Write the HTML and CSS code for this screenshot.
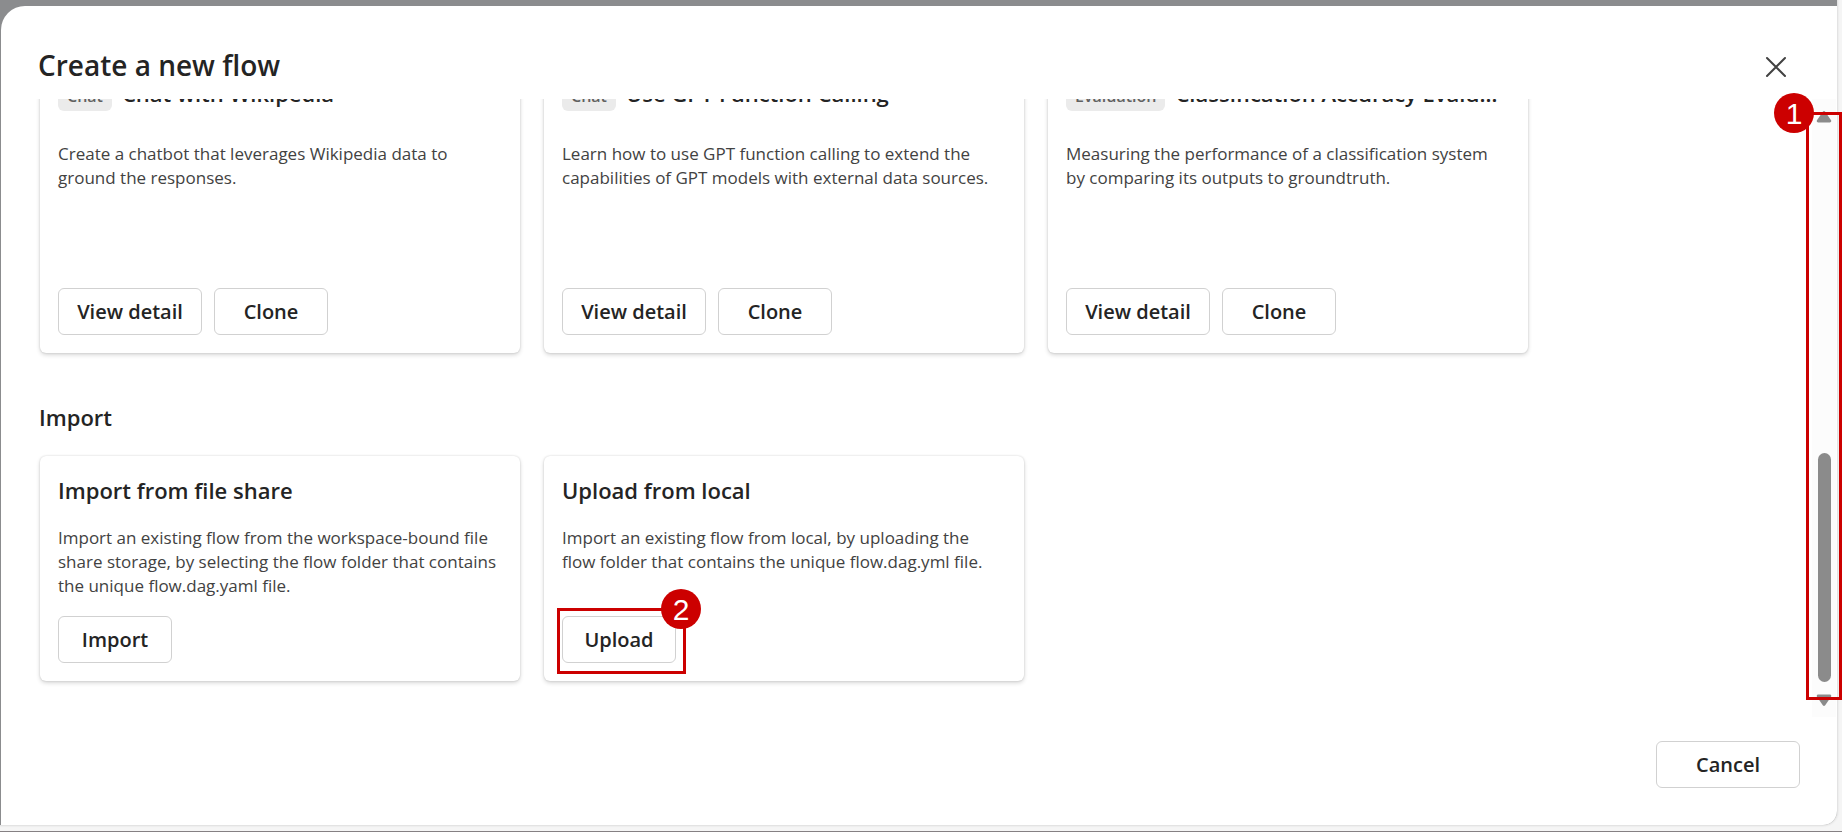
FILE: index.html
```html
<!DOCTYPE html>
<html lang="en">
<head>
<meta charset="utf-8">
<title>Create a new flow</title>
<link rel="stylesheet" href="styles.css">
</head>
<body>
<div class="backdrop">
  <main class="dialog" role="dialog" aria-labelledby="dialog-title">
    <header class="dialog-header">
      <h1 class="dialog-title" id="dialog-title">Create a new flow</h1>
      <button class="close" type="button" aria-label="Close">
        <svg width="22" height="22" viewBox="0 0 22 22" fill="none" stroke="#424242" stroke-width="2" stroke-linecap="round"><path d="M2 2 20 20M20 2 2 20"/></svg>
      </button>
    </header>

    <div class="scroll-area">
      <div class="content">
        <section class="cards">
          <article class="card">
            <div class="card-head"><span class="tag">Chat</span><h3 class="card-title">Chat with Wikipedia</h3></div>
            <p class="card-text tall">Create a chatbot that leverages Wikipedia data to ground the responses.</p>
            <div class="actions"><button class="btn wide" type="button">View detail</button><button class="btn" type="button">Clone</button></div>
          </article>
          <article class="card">
            <div class="card-head"><span class="tag">Chat</span><h3 class="card-title">Use GPT Function Calling</h3></div>
            <p class="card-text tall">Learn how to use GPT function calling to extend the capabilities of GPT models with external data sources.</p>
            <div class="actions"><button class="btn wide" type="button">View detail</button><button class="btn" type="button">Clone</button></div>
          </article>
          <article class="card">
            <div class="card-head"><span class="tag">Evaluation</span><h3 class="card-title">Classification Accuracy Evaluation</h3></div>
            <p class="card-text tall">Measuring the performance of a classification system by comparing its outputs to groundtruth.</p>
            <div class="actions"><button class="btn wide" type="button">View detail</button><button class="btn" type="button">Clone</button></div>
          </article>
        </section>

        <h2 class="section-title">Import</h2>
        <section class="cards">
          <article class="card">
            <h3 class="card-title">Import from file share</h3>
            <p class="card-text">Import an existing flow from the workspace-bound file share storage, by selecting the flow folder that contains the unique flow.dag.yaml file.</p>
            <div class="actions"><button class="btn" type="button">Import</button></div>
          </article>
          <article class="card">
            <h3 class="card-title">Upload from local</h3>
            <p class="card-text">Import an existing flow from local, by uploading the flow folder that contains the unique flow.dag.yml file.</p>
            <div class="actions">
              <div class="marked">
                <button class="btn" type="button">Upload</button>
                <div class="outline outline-upload"><span class="step step-right">2</span></div>
              </div>
            </div>
          </article>
        </section>
      </div>

      <div class="scrollbar">
        <svg class="arrow" width="16" height="12" viewBox="0 0 16 12" fill="#8b8b8b"><path d="M6.8.7a1.6 1.6 0 0 1 2.4 0L14.9 9c.8 1.2.2 2.4-1.2 2.4H2.3C.9 11.4.3 10.2 1.1 9Z"/></svg>
        <span class="space-before"></span>
        <span class="thumb"></span>
        <span class="space-after"></span>
        <svg class="arrow" width="16" height="12" viewBox="0 0 16 12" fill="#8b8b8b"><path d="M6.8 11.3a1.6 1.6 0 0 0 2.4 0L14.9 3c.8-1.2.2-2.4-1.2-2.4H2.3C.9.6.3 1.8 1.1 3Z"/></svg>
      </div>
      <div class="outline outline-scroll"><span class="step step-left">1</span></div>
    </div>

    <footer class="dialog-footer">
      <button class="btn wide" type="button">Cancel</button>
    </footer>
  </main>
</div>
</body>
</html>
```
FILE: styles.css
```css
* {
  box-sizing: border-box;
}

body {
  display: flex;
  height: 100vh;
  margin: 0;
  padding: 0 5px 6px 0;
  border-bottom: 1px solid #858083;
  background: #f5f5f5;
  color: #242424;
  font-family: "Open Sans", "Noto Sans", sans-serif;
  overflow: hidden;
}

h1, h2, h3, p {
  margin: 0;
}

.backdrop {
  flex: 1;
  display: flex;
  min-width: 0;
  padding: 6px 0 0 1px;
  border-radius: 0 0 14px 0;
  background: #8b8c8e;
  box-shadow: 0 0 2px 1px #dcdcdc;
}

.dialog {
  flex: 1;
  display: flex;
  flex-direction: column;
  min-width: 0;
  border-radius: 24px 0 14px 0;
  background: #fff;
}

.dialog-header {
  display: flex;
  align-items: center;
  justify-content: space-between;
  padding: 39px 50px 14px 37px;
}

.dialog-title {
  font-size: 28px;
  font-weight: 600;
  line-height: 40px;
}

.close {
  display: flex;
  margin-top: 4px;
  padding: 0;
  border: 0;
  background: none;
}

.scroll-area {
  position: relative;
  flex: 1;
  display: flex;
  min-height: 0;
}

.content {
  flex: 1;
  display: flex;
  flex-direction: column;
  justify-content: flex-end;
  min-width: 0;
  padding: 0 24px 36px 39px;
  overflow: hidden;
}

.cards {
  display: grid;
  grid-template-columns: repeat(3, minmax(0, 480px));
  gap: 24px;
}

.card {
  display: flex;
  flex-direction: column;
  min-width: 0;
  padding: 18px;
  border-radius: 6px;
  background: #fff;
  box-shadow: 0 0 2px rgba(0, 0, 0, 0.16), 0 2px 4px rgba(0, 0, 0, 0.16);
}

.card-title {
  font-size: 22px;
  font-weight: 600;
  line-height: 32px;
  white-space: nowrap;
  overflow: hidden;
  text-overflow: ellipsis;
}

.card-head {
  display: flex;
  align-items: center;
  gap: 10px;
  margin-bottom: 11px;
}

.card-head .card-title {
  padding-bottom: 4px;
  line-height: 28px;
}

.tag {
  padding: 5px 9px 3px;
  border-radius: 6px;
  background: #ebebeb;
  color: #616161;
  font-size: 16px;
  font-weight: 600;
  line-height: 24px;
}

.card-text {
  min-height: 72px;
  margin: 20px 0 18px;
  color: #424242;
  font-size: 17px;
  line-height: 24px;
}

.tall {
  min-height: 128px;
}

.actions {
  display: flex;
  gap: 12px;
}

.btn {
  min-width: 114px;
  height: 47px;
  padding: 0 16px;
  border: 1px solid #d1d1d1;
  border-radius: 6px;
  background: #fff;
  color: #242424;
  font-family: inherit;
  font-size: 20px;
  font-weight: 600;
}

.wide {
  min-width: 144px;
}

.section-title {
  margin: 48px 0 23px -1px;
  font-size: 22px;
  font-weight: 600;
  line-height: 32px;
}

.scrollbar {
  display: flex;
  flex-direction: column;
  align-items: center;
  width: 24px;
  margin-right: 1px;
  padding: 12px 0 11px;
  background: #fcfcfc;
}

.arrow {
  flex: none;
}

.space-before {
  flex: 330;
}

.thumb {
  flex: 229;
  width: 13px;
  border-radius: 7px;
  background: #8b8b8b;
}

.space-after {
  flex: 12;
}

.dialog-footer {
  display: flex;
  justify-content: flex-end;
  padding: 24px 37px 37px;
}

/* numbered callouts */
.marked {
  position: relative;
}

.outline {
  position: absolute;
  border: 3px solid #c00;
  pointer-events: none;
}

.outline-upload {
  inset: -8px -10px -11px -5px;
}

.outline-scroll {
  top: 13px;
  right: -5px;
  bottom: 17px;
  width: 36px;
}

.step {
  position: absolute;
  top: -22px;
  width: 40px;
  height: 40px;
  border-radius: 50%;
  background: #c00;
  color: #fff;
  font-family: "Liberation Sans", sans-serif;
  font-size: 30px;
  line-height: 41px;
  text-align: center;
}

.step-right {
  right: -18px;
}

.step-left {
  left: -35px;
}
```
